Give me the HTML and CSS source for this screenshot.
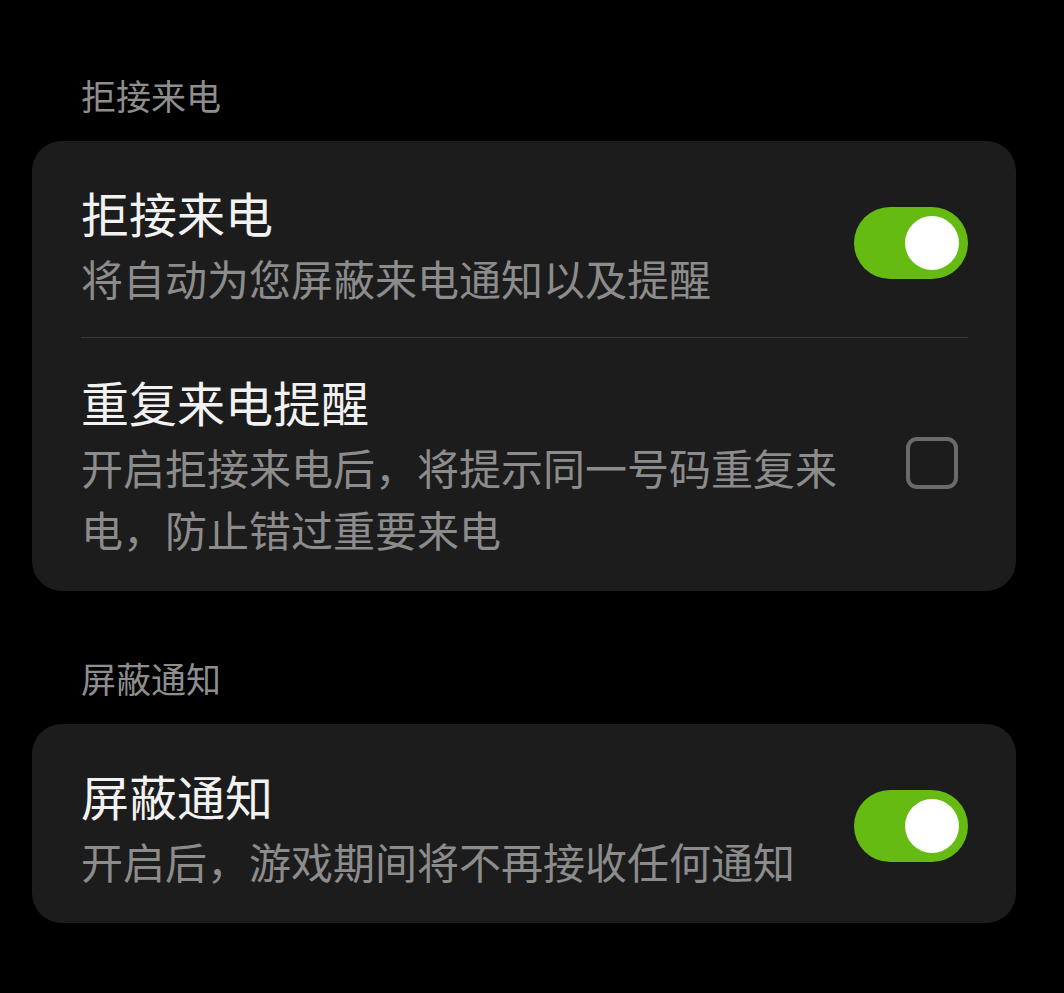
FILE: index.html
```html
<!DOCTYPE html>
<html lang="zh-CN">
<head>
    <meta charset="UTF-8">
    <meta name="viewport" content="width=device-width, initial-scale=1.0">
    <title>游戏免打扰</title>
    <link rel="stylesheet" href="styles.css">
</head>
<body>
    <div class="page">
        <div class="section-title">拒接来电</div>
        <div class="card">
            <div class="row">
                <div class="text">
                    <div class="title">拒接来电</div>
                    <div class="desc">将自动为您屏蔽来电通知以及提醒</div>
                </div>
                <div class="switch on"><span class="knob"></span></div>
            </div>
            <div class="row">
                <div class="text">
                    <div class="title">重复来电提醒</div>
                    <div class="desc">开启拒接来电后，将提示同一号码重复来电，防止错过重要来电</div>
                </div>
                <div class="checkbox"></div>
            </div>
        </div>

        <div class="section-title">屏蔽通知</div>
        <div class="card">
            <div class="row">
                <div class="text">
                    <div class="title">屏蔽通知</div>
                    <div class="desc">开启后，游戏期间将不再接收任何通知</div>
                </div>
                <div class="switch on"><span class="knob"></span></div>
            </div>
        </div>
    </div>
</body>
</html>
```

FILE: styles.css
```css
body {
    margin: 0;
    padding: 0;
    background-color: #000;
    font-family: "Noto Sans CJK SC", "Noto Sans", sans-serif;
}

.page {
    padding: 70px 48px 0 32px;
}

.section-title {
    font-size: 35px;
    line-height: 50px;
    color: #8e8e8e;
    padding-left: 49px;
    margin-bottom: 21px;
}

.card {
    width: 984px;
    box-sizing: border-box;
    background-color: #1c1c1c;
    border-radius: 30px;
    padding: 8px 48px 3px 49px;
    margin-bottom: 62px;
}

.row {
    display: flex;
    align-items: center;
    padding: 28px 0;
}

.row + .row {
    border-top: 1px solid #3a3a3a;
}

.text {
    flex: 1;
    margin-right: 50px;
}

.title {
    font-size: 48px;
    line-height: 70px;
    font-weight: 400;
    color: #f2f2f2;
}

.desc {
    font-size: 42px;
    line-height: 62px;
    color: #8c8c8c;
}

.switch {
    width: 114px;
    height: 72px;
    border-radius: 36px;
    background-color: #65bb12;
    position: relative;
    flex-shrink: 0;
}

.switch .knob {
    position: absolute;
    top: 9px;
    right: 9px;
    width: 54px;
    height: 54px;
    border-radius: 50%;
    background-color: #fff;
}

.checkbox {
    width: 52px;
    height: 52px;
    box-sizing: border-box;
    border: 4px solid #6a6a6a;
    border-radius: 11px;
    margin-right: 10px;
    flex-shrink: 0;
}
```
